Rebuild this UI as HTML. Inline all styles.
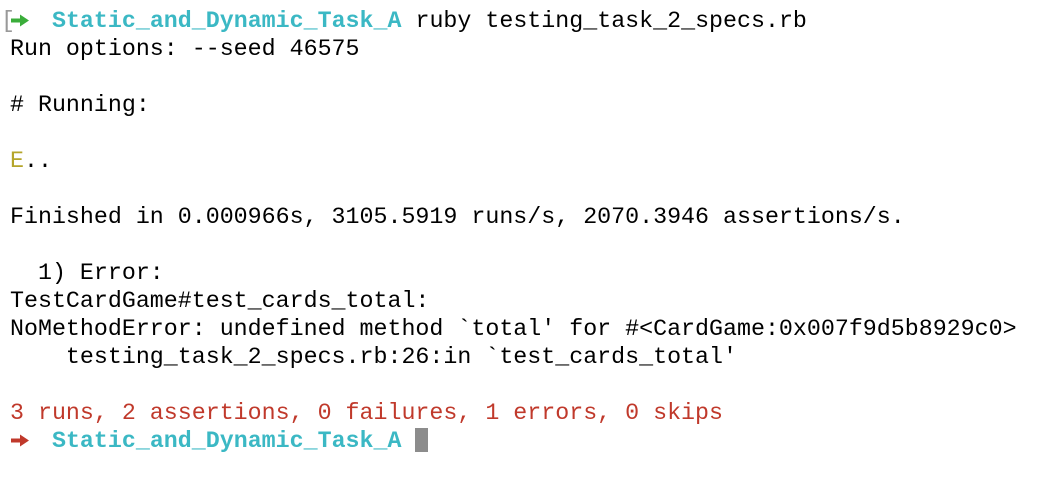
<html><head><style>
body{margin:0;width:1060px;height:482px;background:#fff;overflow:hidden;font-family:"Liberation Mono",monospace;font-size:23.3px;color:#000}
.t{position:absolute;left:10px;top:7px;white-space:pre;line-height:28px}
.c{color:#3bb8c4;font-weight:bold}.r{color:#c0392b}.y{color:#b5a52a}
.cur{display:inline-block;width:13px;height:24px;background:#8c8c8c;vertical-align:-5px}
.a{display:inline-block;width:20px;height:15px;margin-right:-6px;vertical-align:-1px}
</style></head><body>
<div class="t"><span style="color:#999;position:absolute;left:-9px">[</span><svg class="a" viewBox="0 0 20 15"><path d="M1 5.5H10V1.5L19 7.5L10 13.5V9.5H1Z" fill="#3aad3a"/></svg>  <span class="c">Static_and_Dynamic_Task_A</span> ruby testing_task_2_specs.rb
Run options: --seed 46575

# Running:

<span class="y">E</span>..

Finished in 0.000966s, 3105.5919 runs/s, 2070.3946 assertions/s.

  1) Error:
TestCardGame#test_cards_total:
NoMethodError: undefined method `total' for #&lt;CardGame:0x007f9d5b8929c0&gt;
    testing_task_2_specs.rb:26:in `test_cards_total'

<span class="r">3 runs, 2 assertions, 0 failures, 1 errors, 0 skips</span>
<svg class="a" viewBox="0 0 20 15"><path d="M1 5.5H10V1.5L19 7.5L10 13.5V9.5H1Z" fill="#c0392b"/></svg>  <span class="c">Static_and_Dynamic_Task_A</span> <span class="cur"></span></div>
</body></html>
